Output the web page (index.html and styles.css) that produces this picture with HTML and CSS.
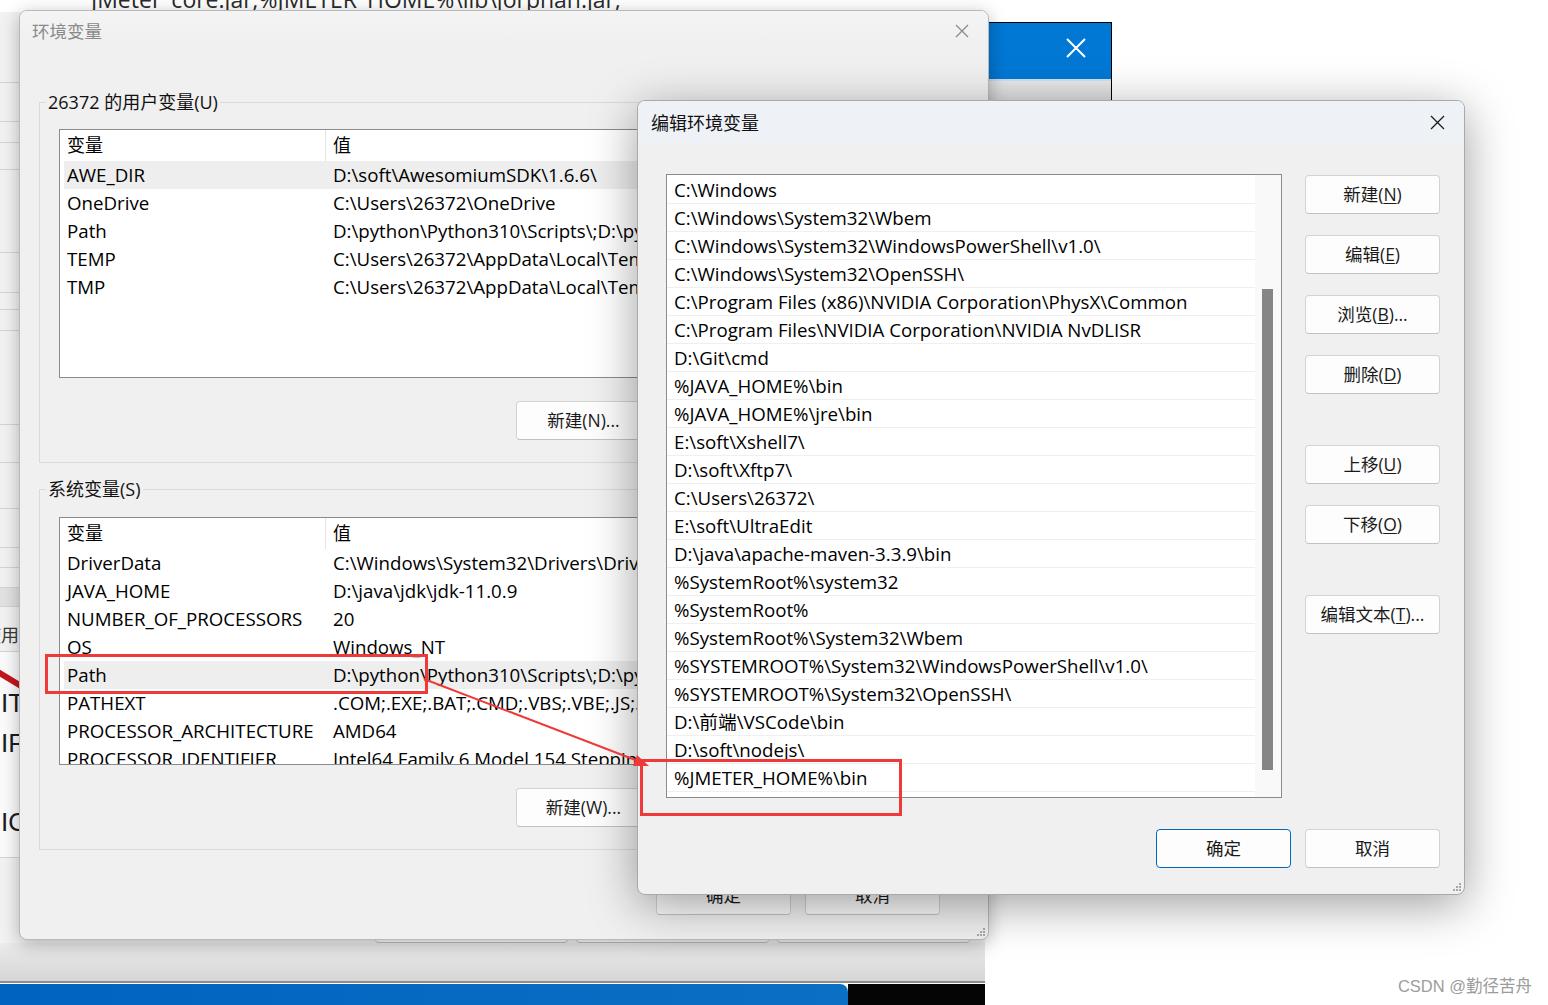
FILE: index.html
```html
<!DOCTYPE html>
<html lang="zh-CN">
<head>
<meta charset="utf-8">
<title>环境变量</title>
<link rel="stylesheet" href="styles.css">
</head>
<body>
<div class="desk">
  <div class="bg-text">JMeter_core.jar;%JMETER_HOME%\lib\jorphan.jar;</div>

  <div class="sysprop">
    <div class="sp-top">
      <div class="sp-strip">
        <div class="seg"></div><div class="seg"></div><div class="seg"></div><div class="seg"></div>
        <div class="seg"></div><div class="seg"></div><div class="seg"></div><div class="seg"></div>
        <div class="seg"></div><div class="seg"></div><div class="seg"></div><div class="seg"></div>
        <div class="seg"></div><div class="seg"></div><div class="seg band"></div>
        <div class="seg use"><span>使用</span></div>
        <div class="seg white">
          <svg class="slash" width="19" height="26" viewBox="0 0 19 26"><path d="M-2 8 L21 22" stroke="#c3161c" stroke-width="6"/></svg>
          <span class="big">IT</span>
          <span class="big">IF</span>
          <span class="big lo">IO</span>
        </div>
        <div class="seg rest"></div>
      </div>
    </div>
    <div class="sp-foot">
      <div class="sp-btns"><span class="btn sp-btn"></span><span class="btn sp-btn"></span><span class="btn sp-btn"></span></div>
      <div class="sp-shade"></div>
    </div>
  </div>

  <div class="taskbar"><div class="tb-blue"></div><div class="tb-black"></div></div>

  <div class="bluewin">
    <div class="bw-title">
      <svg width="20" height="20" viewBox="0 0 20 20"><path d="M1 1L19 19M19 1L1 19" stroke="#fff" stroke-width="2"/></svg>
    </div>
    <div class="bw-band"></div>
  </div>

  <div class="win env">
    <div class="tbar">
      <span class="ttl">环境变量</span>
      <svg class="xicon" width="14" height="14" viewBox="0 0 14 14"><path d="M1 1L13 13M13 1L1 13" stroke="currentColor" stroke-width="1.2"/></svg>
    </div>
    <div class="env-body">
      <fieldset class="grp">
        <legend>26372 的用户变量(U)</legend>
        <div class="lv lv-user">
          <div class="lv-head"><span>变量</span><span>值</span></div>
          <div class="lv-row sel"><span>AWE_DIR</span><span>D:\soft\AwesomiumSDK\1.6.6\</span></div>
          <div class="lv-row"><span>OneDrive</span><span>C:\Users\26372\OneDrive</span></div>
          <div class="lv-row"><span>Path</span><span>D:\python\Python310\Scripts\;D:\python\Python310\</span></div>
          <div class="lv-row"><span>TEMP</span><span>C:\Users\26372\AppData\Local\Temp</span></div>
          <div class="lv-row"><span>TMP</span><span>C:\Users\26372\AppData\Local\Temp</span></div>
        </div>
        <div class="grp-btns"><button class="btn">新建(N)...</button><button class="btn">编辑(E)...</button><button class="btn">删除(D)</button></div>
      </fieldset>
      <fieldset class="grp grp-sys">
        <legend>系统变量(S)</legend>
        <div class="lv lv-sys">
          <div class="lv-head"><span>变量</span><span>值</span></div>
          <div class="lv-row"><span>DriverData</span><span>C:\Windows\System32\Drivers\DriverData</span></div>
          <div class="lv-row"><span>JAVA_HOME</span><span>D:\java\jdk\jdk-11.0.9</span></div>
          <div class="lv-row"><span>NUMBER_OF_PROCESSORS</span><span>20</span></div>
          <div class="lv-row"><span>OS</span><span>Windows_NT</span></div>
          <div class="lv-row sel"><span>Path</span><span>D:\python\Python310\Scripts\;D:\python\Python310\</span></div>
          <div class="lv-row"><span>PATHEXT</span><span>.COM;.EXE;.BAT;.CMD;.VBS;.VBE;.JS;.JSE;.WSF;.WSH;.MSC</span></div>
          <div class="lv-row"><span>PROCESSOR_ARCHITECTURE</span><span>AMD64</span></div>
          <div class="lv-row"><span>PROCESSOR_IDENTIFIER</span><span>Intel64 Family 6 Model 154 Stepping 3, GenuineIntel</span></div>
        </div>
        <div class="grp-btns"><button class="btn">新建(W)...</button><button class="btn">编辑(I)...</button><button class="btn">删除(L)</button></div>
      </fieldset>
      <div class="foot env-foot"><button class="btn">确定</button><button class="btn">取消</button></div>
    </div>
    <svg class="grip" width="9" height="9" viewBox="0 0 9 9"><g fill="#a8a8a8"><rect x="7" y="1" width="2" height="2"/><rect x="4" y="4" width="2" height="2"/><rect x="7" y="4" width="2" height="2"/><rect x="1" y="7" width="2" height="2"/><rect x="4" y="7" width="2" height="2"/><rect x="7" y="7" width="2" height="2"/></g></svg>
  </div>

  <div class="win edit">
    <div class="tbar active">
      <span class="ttl">编辑环境变量</span>
      <svg class="xicon" width="15" height="15" viewBox="0 0 15 15"><path d="M1 1L14 14M14 1L1 14" stroke="currentColor" stroke-width="1.3"/></svg>
    </div>
    <div class="edit-body">
      <div class="edit-main">
        <div class="plist">
          <div class="prows">
            <div class="pr">C:\Windows</div>
            <div class="pr">C:\Windows\System32\Wbem</div>
            <div class="pr">C:\Windows\System32\WindowsPowerShell\v1.0\</div>
            <div class="pr">C:\Windows\System32\OpenSSH\</div>
            <div class="pr">C:\Program Files (x86)\NVIDIA Corporation\PhysX\Common</div>
            <div class="pr">C:\Program Files\NVIDIA Corporation\NVIDIA NvDLISR</div>
            <div class="pr">D:\Git\cmd</div>
            <div class="pr">%JAVA_HOME%\bin</div>
            <div class="pr">%JAVA_HOME%\jre\bin</div>
            <div class="pr">E:\soft\Xshell7\</div>
            <div class="pr">D:\soft\Xftp7\</div>
            <div class="pr">C:\Users\26372\</div>
            <div class="pr">E:\soft\UltraEdit</div>
            <div class="pr">D:\java\apache-maven-3.3.9\bin</div>
            <div class="pr">%SystemRoot%\system32</div>
            <div class="pr">%SystemRoot%</div>
            <div class="pr">%SystemRoot%\System32\Wbem</div>
            <div class="pr">%SYSTEMROOT%\System32\WindowsPowerShell\v1.0\</div>
            <div class="pr">%SYSTEMROOT%\System32\OpenSSH\</div>
            <div class="pr">D:\前端\VSCode\bin</div>
            <div class="pr">D:\soft\nodejs\</div>
            <div class="pr">%JMETER_HOME%\bin</div>
          </div>
          <div class="vscroll"><div class="thumb"></div></div>
        </div>
        <div class="side-btns">
          <button class="btn">新建(<u>N</u>)</button>
          <button class="btn">编辑(<u>E</u>)</button>
          <button class="btn">浏览(<u>B</u>)...</button>
          <button class="btn">删除(<u>D</u>)</button>
          <button class="btn far">上移(<u>U</u>)</button>
          <button class="btn">下移(<u>O</u>)</button>
          <button class="btn far">编辑文本(<u>T</u>)...</button>
        </div>
      </div>
      <div class="foot edit-foot"><button class="btn primary">确定</button><button class="btn">取消</button></div>
    </div>
    <svg class="grip" width="9" height="9" viewBox="0 0 9 9"><g fill="#a8a8a8"><rect x="7" y="1" width="2" height="2"/><rect x="4" y="4" width="2" height="2"/><rect x="7" y="4" width="2" height="2"/><rect x="1" y="7" width="2" height="2"/><rect x="4" y="7" width="2" height="2"/><rect x="7" y="7" width="2" height="2"/></g></svg>
  </div>

  <svg class="annot" width="1548" height="1005" viewBox="0 0 1548 1005">
    <rect x="46.5" y="655.5" width="380" height="37" fill="none" stroke="#ef3a3a" stroke-width="3"/>
    <rect x="641.5" y="760.5" width="259" height="54" fill="none" stroke="#ef3a3a" stroke-width="3"/>
    <line x1="424" y1="679" x2="638" y2="761" stroke="#ef3a3a" stroke-width="2"/>
    <polygon points="649,766 633,766 637,755" fill="#ef3a3a"/>
  </svg>

  <div class="watermark">CSDN @勤径苦舟</div>
</div>
</body>
</html>
```

FILE: styles.css
```css
* { box-sizing: border-box; margin: 0; padding: 0; }
html, body { width: 1548px; height: 1005px; overflow: hidden; background: #fff; }
body {
  font-family: "Open Sans", "Noto Sans CJK SC", sans-serif;
  font-size: 18px;
  color: #000;
}
.desk { position: relative; width: 1548px; height: 1005px; overflow: hidden; background: #fff; }

/* background text at the very top */
.bg-text {
  position: absolute; left: 91px; top: -12px;
  font-size: 23px; line-height: 23px; color: #2a2a2a; white-space: nowrap;
}

/* window behind everything */
.sysprop {
  position: absolute; left: 0; top: 12px; width: 985px; height: 971px;
  background: #f2f2f2; display: flex; flex-direction: column;
  border-bottom: 2px solid #8e8e8e;
}
.sp-top { flex: 1; display: flex; min-height: 0; }
.sp-strip { width: 19px; display: flex; flex-direction: column; overflow: hidden; }
.seg { flex: none; border-bottom: 1px solid #d4d4d4; }
.seg:nth-child(1) { height: 71px; }
.seg:nth-child(2) { height: 39px; }
.seg:nth-child(3) { height: 21px; }
.seg:nth-child(4) { height: 27px; }
.seg:nth-child(5) { height: 83px; }
.seg:nth-child(6) { height: 40px; }
.seg:nth-child(7) { height: 17px; }
.seg:nth-child(8) { height: 21px; }
.seg:nth-child(9) { height: 94px; }
.seg:nth-child(10) { height: 38px; }
.seg:nth-child(11) { height: 46px; }
.seg:nth-child(12) { height: 39px; }
.seg:nth-child(13) { height: 20px; }
.seg:nth-child(14) { height: 20px; }
.seg.band { height: 19px; background: #e2e2e2; }
.seg.use { height: 45px; display: flex; align-items: center; justify-content: flex-end; font-size: 18px; color: #3a3a3a; white-space: nowrap; overflow: hidden; padding-top: 10px; }
.seg.white { height: 206px; background: #fbfbfb; display: flex; flex-direction: column; overflow: hidden; }
.slash { display: block; flex: none; margin-top: 12px; }
.big { font-family: "Liberation Sans", sans-serif; font-size: 26px; line-height: 40px; color: #1c1c1c; white-space: nowrap; margin-left: 1px; }
.big:first-of-type { margin-top: -7px; }
.big.lo { margin-top: 39px; }
.seg.rest { flex: 1; border-bottom: none; }
.sp-foot { flex: none; height: 77px; display: flex; flex-direction: column; }
.sp-btns { height: 39px; display: flex; justify-content: flex-end; gap: 8px; padding-right: 15px; }
.sp-btns .sp-btn { width: 193px; height: 39px; }
.sp-shade { flex: 1; background: linear-gradient(#ebebeb, #d6d6d6); }

.taskbar { position: absolute; left: 0; top: 984px; height: 21px; display: flex; }
.tb-blue { width: 848px; background: linear-gradient(90deg, #0063c0, #0b6fc4); border-top-right-radius: 8px; }
.tb-black { width: 137px; background: #050505; }

/* blue window top right */
.bluewin {
  position: absolute; left: 880px; top: 22px; width: 232px; height: 80px;
  border-top: 1px solid #000; border-right: 1px solid #000;
  display: flex; flex-direction: column;
}
.bw-title { height: 56px; background: #0078d4; display: flex; align-items: center; justify-content: flex-end; padding: 0 25px 6px 0; }
.bw-band { flex: 1; background: linear-gradient(#e9e9e9, #dcdcdc); border-top: 2px solid #cfe0ef; }

/* generic window */
.win {
  position: absolute; background: #f0f0f0; border: 1px solid #b9b9b9; border-radius: 8px;
  overflow: hidden; display: flex; flex-direction: column;
}
.tbar { flex: none; height: 42px; display: flex; align-items: center; justify-content: space-between; padding: 0 19px 0 12px; }
.ttl { font-size: 17px; white-space: nowrap; }
.xicon { display: block; }
.grip { position: absolute; right: 3px; bottom: 3px; }

/* main dialog */
.env { left: 19px; top: 10px; width: 970px; height: 930px; box-shadow: 0 4px 18px rgba(0,0,0,0.28); }
.env .tbar { height: 39px; background: linear-gradient(#f4f4f4, #efefef); color: #8a8a8a; }
.env .ttl { font-size: 17.5px; }
.env-body { flex: 1; padding: 40px 19px 0 19px; display: flex; flex-direction: column; }
.grp { border: 1px solid #dadada; padding: 15px 19px 22px 19px; min-width: 0; }
.grp legend { font-size: 18px; line-height: 24px; padding: 0 2px; margin-left: -13px; white-space: nowrap; color: #111; }
.grp-sys { margin-top: 14px; padding-top: 16px; }
.lv { background: #fff; border: 1px solid #8b8b8b; overflow: hidden; font-size: 18.7px; }
.lv-user { height: 249px; }
.lv-sys { height: 248px; }
.lv-head { height: 31px; display: grid; grid-template-columns: 266px 1fr; align-items: center; font-size: 18px; }
.lv-head span { padding-left: 7px; line-height: 31px; }
.lv-head span:first-child { border-right: 1px solid #e4e4e4; }
.lv-row { height: 28px; margin: 0 4px; display: grid; grid-template-columns: 262px 1fr; align-items: center; white-space: nowrap; }
.lv-row span { overflow: hidden; line-height: 28px; }
.lv-row span:first-child { padding-left: 3px; }
.lv-row span:last-child { padding-left: 7px; }
.lv-row.sel { background: #eeeeee; }
.grp-btns { margin-top: 23px; display: flex; justify-content: flex-end; gap: 14px; }

.btn {
  display: block; width: 135px; height: 39px; background: #fdfdfd;
  border: 1px solid #d3d3d3; border-bottom-color: #c2c2c2; border-radius: 4px;
  font-family: inherit; font-size: 17.5px; color: #1a1a1a; line-height: 37px; text-align: center; white-space: nowrap;
}
.btn u { text-underline-offset: 2px; text-decoration-thickness: 1px; }
.btn.primary { border: 1px solid #0067c0; }
.foot { display: flex; justify-content: flex-end; gap: 14px; }
.env-foot { margin-top: 26px; padding-right: 29px; }

/* edit dialog */
.edit { left: 637px; top: 100px; width: 828px; height: 795px; box-shadow: 0 10px 48px rgba(0,0,0,0.38); border-color: #a9a9a9; }
.edit .tbar { background: #eef2f7; padding-right: 19px; padding-left: 13px; }
.edit .tbar .ttl { color: #111; font-size: 18px; }
.edit .xicon { color: #1a1a1a; }
.edit-body { flex: 1; padding: 31px 24px 26px 28px; display: flex; flex-direction: column; }
.edit-main { display: flex; gap: 23px; }
.plist { width: 616px; height: 624px; background: #fff; border: 1px solid #8b8b8b; display: flex; overflow: hidden; }
.prows { flex: 1; padding-top: 1px; min-width: 0; font-size: 18.7px; }
.pr { height: 28px; line-height: 28px; padding-left: 7px; border-bottom: 1px solid #efefef; white-space: nowrap; overflow: hidden; }
.vscroll { width: 26px; flex: none; background: #f9f9f9; padding: 114px 0 0 7px; }
.thumb { width: 11px; height: 481px; background: #858585; }
.side-btns { display: flex; flex-direction: column; gap: 21px; padding-top: 1px; }
.side-btns .far { margin-top: 30px; }
.edit-foot { margin-top: 31px; }

.annot { position: absolute; left: 0; top: 0; pointer-events: none; }

.watermark {
  position: absolute; right: 16px; bottom: 8px;
  font-family: "Liberation Sans", "Noto Sans CJK SC", sans-serif; font-size: 16.5px; color: #9c9c9c;
  text-shadow: 0 0 1px #fff;
}
```
